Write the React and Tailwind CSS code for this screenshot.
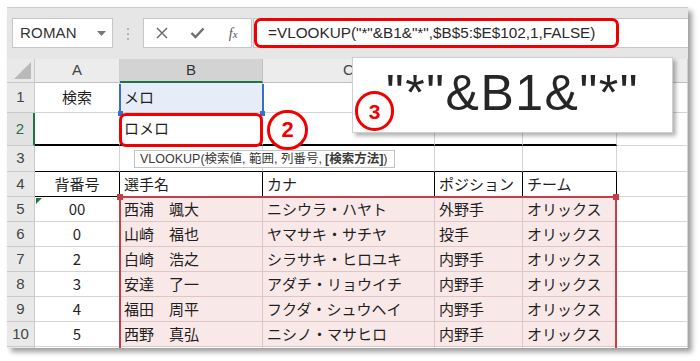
import React from "react";

const rowsData = [
  ["検索", "メロ", "", "", "", ""],
  ["", "ロメロ", "", "", "", ""],
  ["", "", "", "", "", ""],
  ["背番号", "選手名", "カナ", "ポジション", "チーム", ""],
  ["00", "西浦　颯大", "ニシウラ・ハヤト", "外野手", "オリックス", ""],
  ["0", "山崎　福也", "ヤマサキ・サチヤ", "投手", "オリックス", ""],
  ["2", "白崎　浩之", "シラサキ・ヒロユキ", "内野手", "オリックス", ""],
  ["3", "安達　了一", "アダチ・リョウイチ", "内野手", "オリックス", ""],
  ["4", "福田　周平", "フクダ・シュウヘイ", "内野手", "オリックス", ""],
  ["5", "西野　真弘", "ニシノ・マサヒロ", "内野手", "オリックス", ""],
  ["", "", "", "", "", ""],
];

const colNames = ["A", "B", "C", "D", "E", "F"];

function cellClass(r, ci) {
  const cls = ["relative flex items-center overflow-hidden whitespace-nowrap border-r border-b text-[15px] text-[#1f1f1f]"];
  const pink = r >= 5 && r <= 10 && ci >= 1 && ci <= 4;
  const inTable = ci <= 4;
  if (ci === 0) cls.push("justify-center");
  else cls.push("pl-[4px]");
  if (pink) cls.push("bg-[#f9e8e8]");
  else if (r === 1 && ci === 1) cls.push("bg-[#e7edf8]");
  else cls.push("bg-white");
  if (r === 4 && inTable) cls.push("border-r-black");
  else if (pink) cls.push("border-r-[#dcc6c6]");
  else cls.push("border-r-[#d4d4d4]");
  if (r === 2 && inTable) cls.push("border-b-2 border-b-black");
  else if (r === 3 && inTable) cls.push("border-b-black");
  else if (r === 4 && ci === 0) cls.push("border-b-black");
  else if (pink) cls.push("border-b-[#dcc6c6]");
  else cls.push("border-b-[#d4d4d4]");
  return cls.join(" ");
}

function Toolbar() {
  return (
    <div className="h-[52px] shrink-0 bg-[#e6e6e6] border-t border-[#cdcdcd] flex items-start pt-[10px]">
      <div className="ml-[5px] w-[101px] h-[30px] bg-white border border-[#c6c6c6] flex items-center pl-[7px] pr-[6px] justify-between">
        <span className="text-[15px] text-[#333] tracking-[0.2px]" style={{ fontFamily: '"Liberation Sans", Arial, sans-serif' }}>ROMAN</span>
        <svg width="9" height="5" viewBox="0 0 9 5">
          <polygon points="0,0 9,0 4.5,5" fill="#777" />
        </svg>
      </div>
      <div className="ml-[14px] mt-[10px] flex flex-col gap-[3px]">
        <div className="w-[2px] h-[2px] bg-[#b3b3b3]" />
        <div className="w-[2px] h-[2px] bg-[#b3b3b3]" />
        <div className="w-[2px] h-[2px] bg-[#b3b3b3]" />
      </div>
      <div className="ml-[14px] w-[109px] h-[30px] bg-white border border-[#c6c6c6] flex items-center">
        <div className="w-[36px] flex justify-center">
          <svg width="12" height="12" viewBox="0 0 12 12">
            <path d="M1 1 L11 11 M11 1 L1 11" stroke="#6e6e6e" strokeWidth="1.5" fill="none" />
          </svg>
        </div>
        <div className="w-[36px] flex justify-center">
          <svg width="15" height="12" viewBox="0 0 15 12">
            <path d="M1.5 6 L5.5 10 L13.5 1.5" stroke="#6e6e6e" strokeWidth="2.4" fill="none" />
          </svg>
        </div>
        <div className="w-[36px] flex justify-center">
          <span className="italic text-[14px] text-[#555]" style={{ fontFamily: '"Liberation Serif", serif' }}>
            f<span className="text-[11px]">x</span>
          </span>
        </div>
      </div>
      <div className="ml-[1px] flex-1 h-[30px] bg-white border-y border-l border-[#c6c6c6] relative">
        <div className="absolute left-[0px] top-[-1px] w-[365px] h-[30px] border-[3px] border-[#f00000] rounded-[7px] flex items-center pl-[11px]">
          <span className="text-[15.3px] text-[#2a2a2a] whitespace-nowrap" style={{ fontFamily: '"Liberation Sans", Arial, sans-serif' }}>
            =VLOOKUP("*"&amp;B1&amp;"*",$B$5:$E$102,1,FALSE)
          </span>
        </div>
      </div>
    </div>
  );
}

function Grid() {
  const hdrFont = { fontFamily: '"Liberation Sans", Arial, sans-serif' };
  return (
    <div className="grid grid-cols-[28px_85px_143px_172px_88px_94px_71px] grid-rows-[24px_30px_33px_26px_25px_25px_25px_25px_25px_25px_25px_25px]">
      <div className="relative bg-[#e9e9e9] border-r border-b border-[#c9c9c9]">
        <svg width="17" height="17" viewBox="0 0 17 17" className="absolute right-[3px] bottom-[3px]">
          <polygon points="17,0 17,17 0,17" fill="#b9b9b9" />
        </svg>
      </div>
      {colNames.map((c) => (
        <div
          key={c}
          className={
            c === "B"
              ? "flex items-center justify-center bg-[#d3d3d3] border-r border-r-[#c0c0c0] border-b-2 border-b-[#217346] text-[15px] text-[#333]"
              : "flex items-center justify-center bg-[#ececec] border-r border-b border-r-[#d0d0d0] border-b-[#c0c0c0] text-[15px] text-[#444]"
          }
          style={hdrFont}
        >
          {c}
        </div>
      ))}
      {rowsData.map((row, ri) => {
        const r = ri + 1;
        return (
          <React.Fragment key={r}>
            <div
              className={
                r === 2
                  ? "flex items-center justify-center bg-[#e2e2e2] border-b border-b-[#c9c9c9] border-r-2 border-r-[#217346] text-[15px] text-[#2f6a4a]"
                  : "flex items-center justify-center bg-[#e9e9e9] border-r border-b border-[#c9c9c9] text-[15px] text-[#444]"
              }
              style={hdrFont}
            >
              {r <= 10 ? r : ""}
            </div>
            {row.map((t, ci) => (
              <div key={ci} className={cellClass(r, ci)}>
                {r === 5 && ci === 0 && (
                  <div className="absolute left-[1px] top-[1px] w-0 h-0 border-t-[6px] border-t-[#217346] border-r-[6px] border-r-transparent" />
                )}
                {t}
              </div>
            ))}
          </React.Fragment>
        );
      })}
    </div>
  );
}

export default function App() {
  return (
    <div
      className="w-[700px] h-[361px] bg-white pl-[7px] pt-[7px] overflow-hidden"
      style={{ fontFamily: '"Noto Sans CJK JP", "Noto Sans", sans-serif' }}
    >
      <div className="relative w-[681px] h-[341px] flex flex-col overflow-hidden shadow-[4px_4px_5px_rgba(0,0,0,0.38)]">
        <Toolbar />
        <Grid />

        <div className="absolute left-[112px] top-[77px] w-[145px] h-[30px] border-x-2 border-[#3a6fc9]">
          <div className="absolute left-[-3px] bottom-[-2px] w-[5px] h-[5px] bg-[#3a6fc9]" />
          <div className="absolute right-[-3px] bottom-[-2px] w-[5px] h-[5px] bg-[#3a6fc9]" />
        </div>

        <div className="absolute left-[112px] top-[189px] w-[498px] h-[200px] border-2 border-[#c33f4a]">
          <div className="absolute left-[-4px] top-[-4px] w-[6px] h-[6px] bg-[#c33f4a]" />
          <div className="absolute right-[-4px] top-[-4px] w-[6px] h-[6px] bg-[#c33f4a]" />
        </div>

        <div className="absolute left-[112px] top-[106px] w-[144px] h-[34px] border-[3px] border-[#f00000] rounded-[7px]" />

        <div className="absolute left-[260px] top-[103px] w-[41px] h-[40px] rounded-full border-[3px] border-[#f00000] bg-white flex items-center justify-center">
          <span className="text-[22px] font-bold text-[#f00000] leading-none" style={{ fontFamily: '"Liberation Sans", Arial, sans-serif' }}>2</span>
        </div>

        <div
          className="absolute left-[127px] top-[143px] w-[261px] h-[18px] bg-white border border-[#c3c3c3] flex items-center pl-[5px] text-[12.5px] text-[#3a3a3a] whitespace-nowrap"
          style={{ fontFamily: '"Liberation Sans", "Noto Sans CJK JP", sans-serif' }}
        >
          VLOOKUP(検索値, 範囲, 列番号, <span className="font-bold ml-[3px]">[検索方法]</span>)
        </div>

        <div className="absolute left-[345px] top-[50px] w-[321px] h-[76px] bg-white border border-[#cfcfcf] shadow-[3px_3px_4px_rgba(0,0,0,0.3)] flex items-center justify-center pb-[4px]">
          <span className="text-[50px] leading-none text-[#262626] tracking-[1.5px]" style={{ fontFamily: '"Liberation Sans", Arial, sans-serif' }}>
            "*"&amp;B1&amp;"*"
          </span>
        </div>

        <div className="absolute left-[348px] top-[84px] w-[39px] h-[40px] rounded-full border-[3px] border-[#f00000] bg-white flex items-center justify-center">
          <span className="text-[21px] font-bold text-[#f00000] leading-none" style={{ fontFamily: '"Liberation Sans", Arial, sans-serif' }}>3</span>
        </div>
      </div>
    </div>
  );
}
